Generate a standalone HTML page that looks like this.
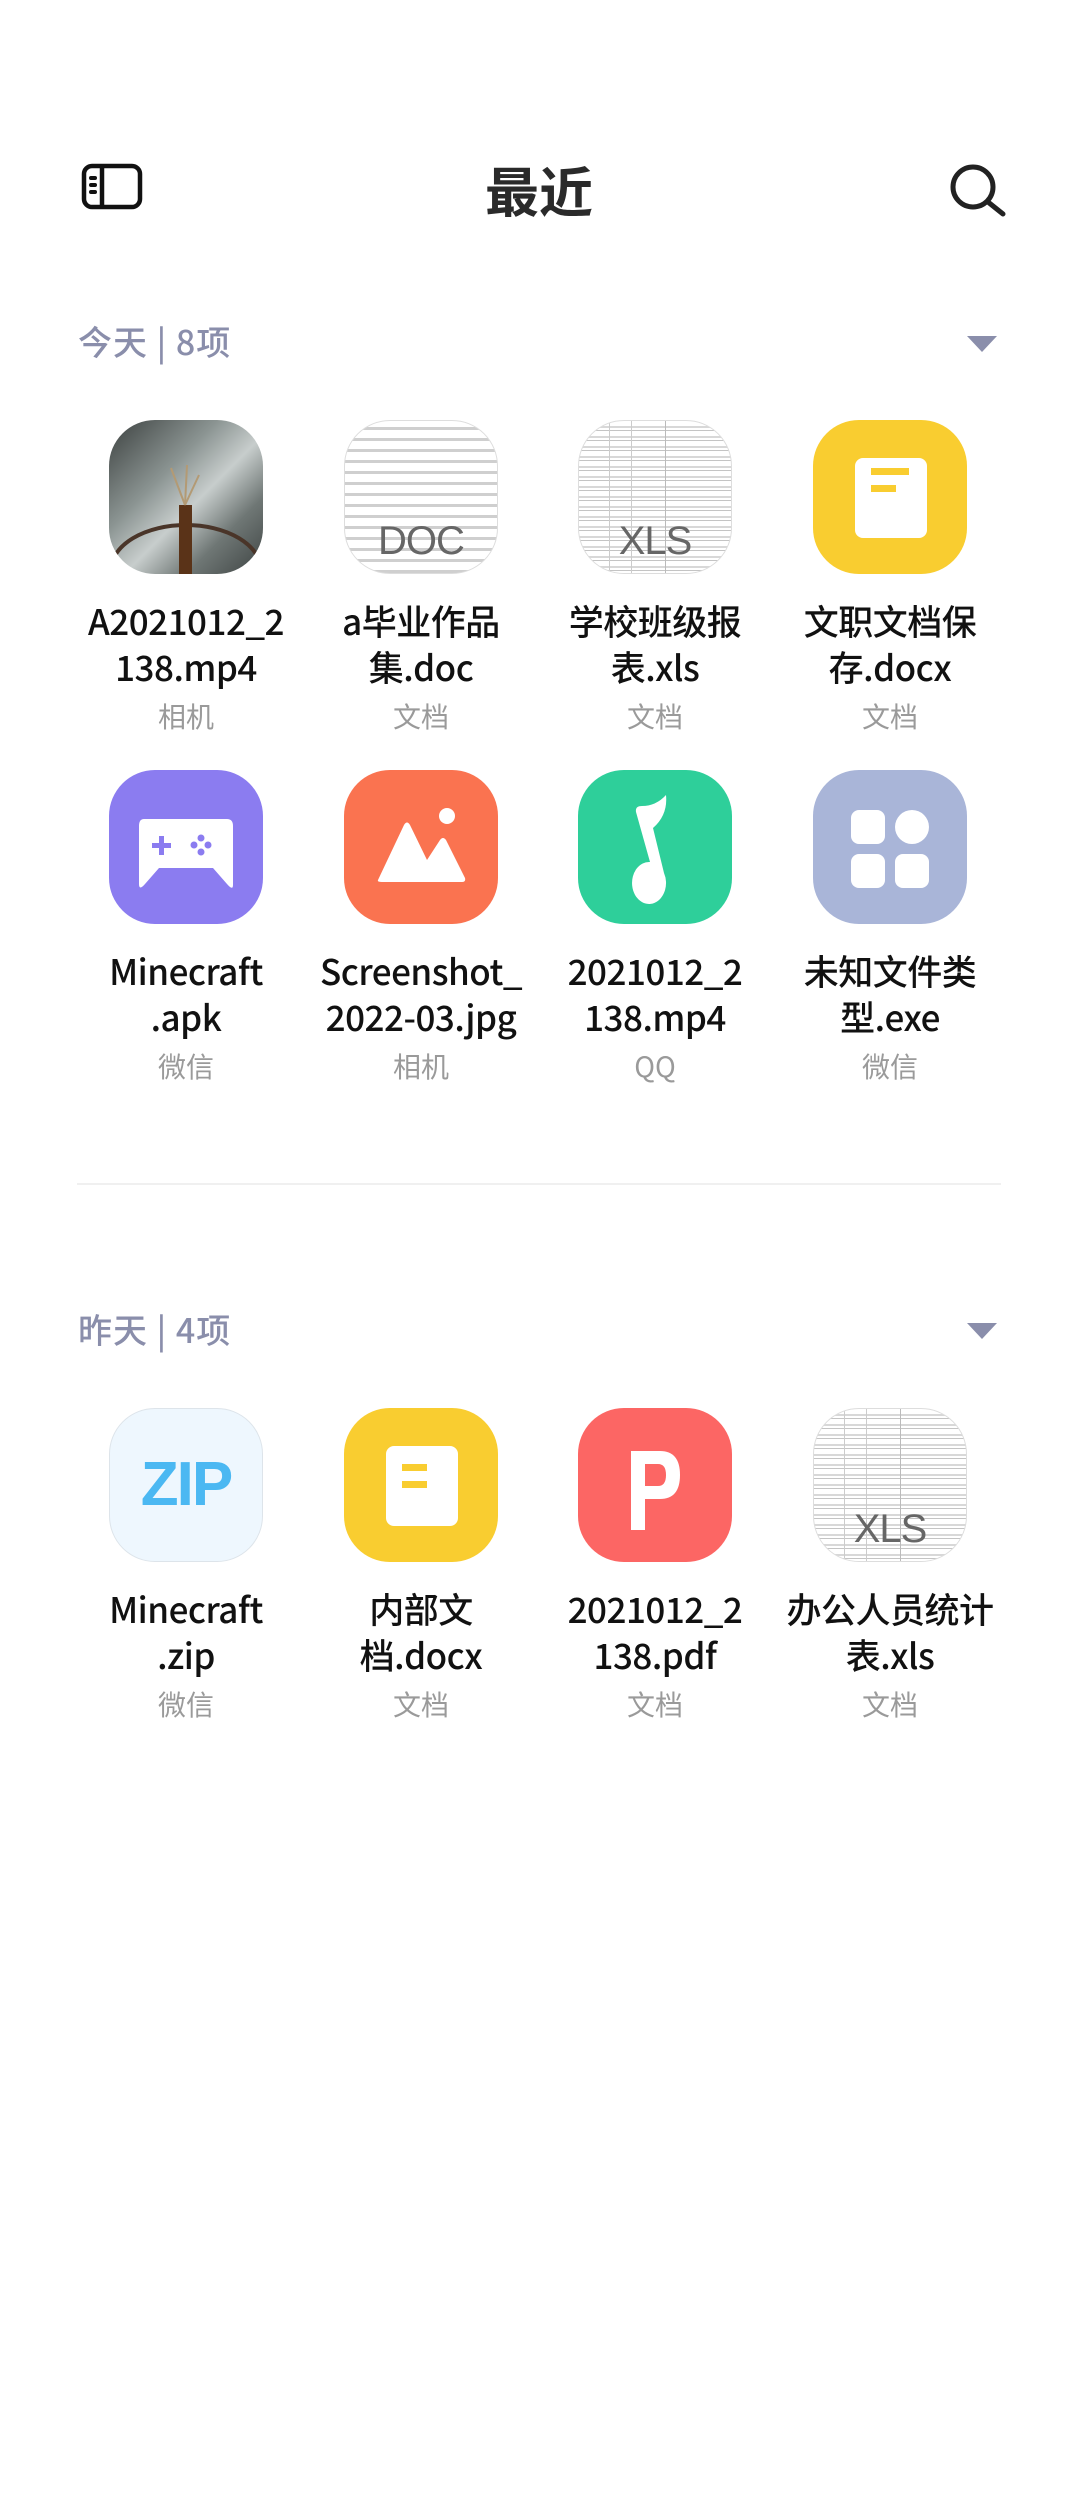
<!DOCTYPE html>
<html><head><meta charset="utf-8"><style>
*{margin:0;padding:0;box-sizing:border-box}
body{width:1078px;height:2520px;background:#fff;position:relative;overflow:hidden;font-family:"Liberation Sans","Noto Sans CJK SC",sans-serif}
.abs{position:absolute}
.title{left:0;width:1078px;text-align:center;top:149px;font-size:54px;font-weight:bold;color:#2a2a2a;font-family:"Noto Sans CJK SC",sans-serif}
.sec{left:78px;font-size:34px;color:#8a8eab;font-family:"Noto Sans CJK SC",sans-serif;font-weight:500;letter-spacing:1px;white-space:pre}
.tri{width:0;height:0;border-left:15px solid transparent;border-right:15px solid transparent;border-top:16px solid #8a8eab;left:967px}
.item{width:234px;text-align:center}
.ic{position:relative;width:154px;height:154px;margin:0 auto;border-radius:46px;overflow:hidden}
.ic svg{position:absolute;left:0;top:0}
.nm{font-size:35px;line-height:46px;color:#111;margin-top:24px;font-family:"Noto Sans CJK SC",sans-serif;font-weight:500;white-space:nowrap;letter-spacing:-0.5px}
.src{font-size:28px;line-height:40px;color:#9a9a9a;margin-top:6px;font-family:"Noto Sans CJK SC",sans-serif}
.doc{background:#fff;border:1px solid #ddd;background-image:repeating-linear-gradient(#fff 0 6px,#cfcfcf 6px 9px,#fff 9px 11px)}
.xls{background:#fff;border:1px solid #ddd;background-image:linear-gradient(90deg,transparent 30px,#ccc 30px 31px,transparent 31px 52px,#ccc 52px 53px,transparent 53px 86px,#bbb 86px 87px,transparent 87px),repeating-linear-gradient(#fff 0 5px,#d8d8d8 5px 7px,#fff 7px 9px,#c4c4c4 9px 10px)}
.lbl{position:absolute;left:0;width:100%;text-align:center;font-size:40px;color:#666;top:98px;letter-spacing:-1px}
</style></head><body>

<svg class="abs" style="left:80px;top:162px" width="64" height="50" viewBox="0 0 64 50"><rect x="4" y="4" width="56" height="41" rx="8" fill="none" stroke="#111" stroke-width="4.5"/><line x1="22" y1="4" x2="22" y2="45" stroke="#111" stroke-width="4.5"/><g fill="#111"><rect x="9" y="14" width="8" height="4" rx="2"/><rect x="9" y="21" width="8" height="4" rx="2"/><rect x="9" y="28" width="8" height="4" rx="2"/></g></svg>
<div class="abs title">最近</div>
<svg class="abs" style="left:946px;top:158px" width="64" height="60" viewBox="0 0 64 60"><circle cx="27" cy="29" r="20" fill="none" stroke="#222" stroke-width="5"/><line x1="42" y1="44" x2="57" y2="56" stroke="#222" stroke-width="5" stroke-linecap="round"/></svg>

<div class="abs sec" style="top:316px">今天 | 8项</div>
<div class="abs tri" style="top:336px"></div>

<div class="abs item" style="left:69px;top:420px">
 <div class="ic" style="background:linear-gradient(135deg,#3c4140 0%,#8a9391 35%,#c7cdcc 55%,#6f7775 75%,#3e4443 100%)">
  <svg width="154" height="154"><ellipse cx="77" cy="150" rx="75" ry="45" fill="none" stroke="#4a3529" stroke-width="4"/><rect x="70" y="85" width="13" height="69" fill="#5a3318"/><g stroke="#b39a74" stroke-width="2"><line x1="76" y1="85" x2="62" y2="48"/><line x1="76" y1="85" x2="90" y2="55"/><line x1="76" y1="85" x2="78" y2="45"/></g></svg>
 </div>
 <div class="nm">A2021012_2<br>138.mp4</div><div class="src">相机</div>
</div>
<div class="abs item" style="left:304px;top:420px">
 <div class="ic doc"><div class="lbl">DOC</div></div>
 <div class="nm">a毕业作品<br>集.doc</div><div class="src">文档</div>
</div>
<div class="abs item" style="left:538px;top:420px">
 <div class="ic xls"><div class="lbl">XLS</div></div>
 <div class="nm">学校班级报<br>表.xls</div><div class="src">文档</div>
</div>
<div class="abs item" style="left:773px;top:420px">
 <div class="ic" style="background:#f9cd30"><svg width="154" height="154"><rect x="42" y="38" width="72" height="80" rx="8" fill="#fff"/><rect x="58" y="48" width="38" height="7" fill="#f9cd30"/><rect x="58" y="65" width="25" height="7" fill="#f9cd30"/></svg></div>
 <div class="nm">文职文档保<br>存.docx</div><div class="src">文档</div>
</div>

<div class="abs item" style="left:69px;top:770px">
 <div class="ic" style="background:#8b7cf0"><svg width="154" height="154"><path d="M35 49 H118 Q124 49 124 56 V115 Q124 121 118 114 L104 98 H50 L36 114 Q30 121 30 114 V56 Q30 49 35 49 Z" fill="#fff"/><g fill="#8b7cf0"><rect x="50" y="66" width="5" height="19"/><rect x="43" y="73" width="19" height="5"/><circle cx="92" cy="68" r="3.5"/><circle cx="92" cy="82" r="3.5"/><circle cx="85" cy="75" r="3.5"/><circle cx="99" cy="75" r="3.5"/></g></svg></div>
 <div class="nm">Minecraft<br>.apk</div><div class="src">微信</div>
</div>
<div class="abs item" style="left:304px;top:770px">
 <div class="ic" style="background:#fa7350"><svg width="154" height="154"><circle cx="103" cy="46" r="8" fill="#fff"/><path d="M34 110 L60 55 Q63 50 66 55 L83 90 L96 70 Q99 66 102 70 L121 108 Q122 112 118 112 H38 Q33 112 34 110Z" fill="#fff"/></svg></div>
 <div class="nm">Screenshot_<br>2022-03.jpg</div><div class="src">相机</div>
</div>
<div class="abs item" style="left:538px;top:770px">
 <div class="ic" style="background:#2ecf9a"><svg width="154" height="154"><path d="M64 36 Q78 36 88 25 Q90 45 75 58 L86 103 A17 21 0 1 1 72 92 L58 42 Q57 36 64 36Z" fill="#fff"/></svg></div>
 <div class="nm">2021012_2<br>138.mp4</div><div class="src">QQ</div>
</div>
<div class="abs item" style="left:773px;top:770px">
 <div class="ic" style="background:#a9b5d8"><svg width="154" height="154"><rect x="38" y="40" width="34" height="34" rx="8" fill="#fff"/><rect x="82" y="40" width="34" height="34" rx="17" fill="#fff"/><rect x="38" y="84" width="34" height="34" rx="8" fill="#fff"/><rect x="82" y="84" width="34" height="34" rx="8" fill="#fff"/></svg></div>
 <div class="nm">未知文件类<br>型.exe</div><div class="src">微信</div>
</div>

<div class="abs" style="left:77px;top:1183px;width:924px;height:2px;background:#f0f0f0"></div>

<div class="abs sec" style="top:1304px">昨天 | 4项</div>
<div class="abs tri" style="top:1323px"></div>

<div class="abs item" style="left:69px;top:1408px">
 <div class="ic" style="background:#eef7fe;border:1px solid #dde4ea"><div style="position:absolute;left:0;width:100%;top:40px;text-align:center;font-size:62px;font-weight:bold;color:#4bb8f2;letter-spacing:-2px">ZIP</div></div>
 <div class="nm">Minecraft<br>.zip</div><div class="src">微信</div>
</div>
<div class="abs item" style="left:304px;top:1408px">
 <div class="ic" style="background:#f9cd30"><svg width="154" height="154"><rect x="42" y="38" width="72" height="80" rx="8" fill="#fff"/><rect x="58" y="56" width="25" height="7" fill="#f9cd30"/><rect x="58" y="73" width="25" height="7" fill="#f9cd30"/></svg></div>
 <div class="nm">内部文<br>档.docx</div><div class="src">文档</div>
</div>
<div class="abs item" style="left:538px;top:1408px">
 <div class="ic" style="background:#fc6664"><svg width="154" height="154"><path d="M53 43 H82 Q102 43 102 67 Q102 91 82 91 H67 V122 H53 Z M67 56 V78 H80 Q88 78 88 67 Q88 56 80 56Z" fill="#fff" fill-rule="evenodd"/></svg></div>
 <div class="nm">2021012_2<br>138.pdf</div><div class="src">文档</div>
</div>
<div class="abs item" style="left:773px;top:1408px">
 <div class="ic xls"><div class="lbl">XLS</div></div>
 <div class="nm">办公人员统计<br>表.xls</div><div class="src">文档</div>
</div>

</body></html>
